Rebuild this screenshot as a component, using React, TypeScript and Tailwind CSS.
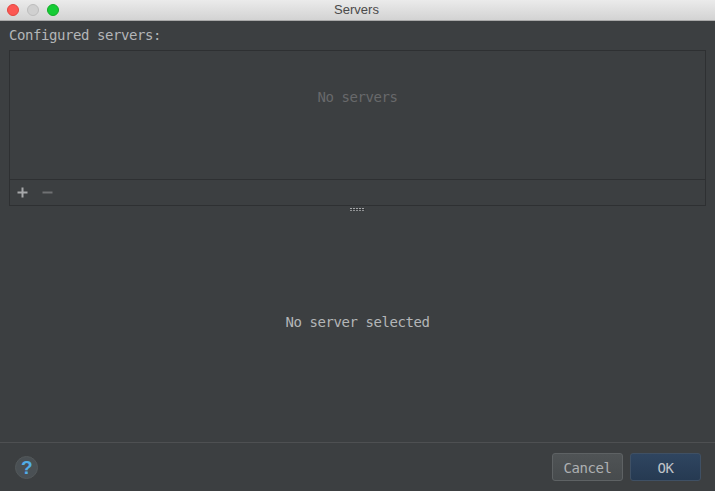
const mono = "font-['DejaVu_Sans_Mono',monospace]"

function TrafficLights() {
  return (
    <div className="flex items-center gap-[8px] pl-[7px]">
      <span className="h-3 w-3 rounded-full border-[0.5px] border-[#e2463f] bg-[#fc5753]" />
      <span className="h-3 w-3 rounded-full border-[0.5px] border-[#bdbdbd] bg-[#d0d0d0]" />
      <span className="h-3 w-3 rounded-full border-[0.5px] border-[#12ac28] bg-[#15cc35]" />
    </div>
  )
}

function SplitterGrip() {
  return (
    <svg width="16" height="4" viewBox="0 0 16 4" className="block">
      {[0, 3, 6, 9, 12].map((x) => (
        <g key={x}>
          <rect x={x} y="0" width="2" height="1" fill="#a4a6a8" />
          <rect x={x} y="2" width="2" height="1" fill="#8f9193" />
          <rect x={x + 2} y="1" width="1" height="1" fill="#2a2c2e" />
        </g>
      ))}
    </svg>
  )
}

function HelpIcon() {
  return (
    <div className="flex h-[23px] w-[23px] items-center justify-center rounded-full border border-[#53585a] bg-[#4a5054]">
      <span className="font-['Liberation_Sans',sans-serif] text-[19px] leading-none font-bold text-[#52ade8]">?</span>
    </div>
  )
}

export default function App() {
  return (
    <div className={`flex h-[491px] w-[715px] flex-col overflow-hidden bg-[#3c3f41] text-[14px] tracking-[-0.43px] ${mono}`}>
      {/* Title bar */}
      <div className="relative flex h-[21px] shrink-0 items-center border-b border-[#a9a9a9] bg-gradient-to-b from-[#ebebeb] to-[#d3d3d3]">
        <TrafficLights />
        <span className="absolute inset-x-0 pr-[2px] text-center font-['Liberation_Sans',sans-serif] text-[13px] tracking-normal text-[#4a4a4a]">
          Servers
        </span>
      </div>

      <div className="flex min-h-0 flex-1 flex-col">
        <div className="h-[29px] shrink-0 pt-[5px] pl-[9px] leading-[19px] text-[#b4b6b8]">Configured servers:</div>

        {/* Server list */}
        <div className="mx-[9px] flex h-[156px] shrink-0 flex-col border border-[#2e3032]">
          <div className="flex h-[128px] shrink-0 justify-center pt-[37px] leading-[19px] text-[#68696b]">No servers</div>
          <div className="flex h-[26px] shrink-0 items-center gap-[14px] border-t border-[#2e3032] pl-[7px]">
            <svg width="11" height="11" viewBox="0 0 11 11">
              <path d="M4.5 0.5h2v4h4v2h-4v4h-2v-4h-4v-2h4z" fill="#a6a8aa" />
            </svg>
            <svg width="11" height="11" viewBox="0 0 11 11">
              <rect x="0.5" y="4.5" width="10" height="2" fill="#6f7173" />
            </svg>
          </div>
        </div>

        <div className="flex h-[7px] shrink-0 items-center justify-center pt-[1px]">
          <SplitterGrip />
        </div>

        <div className="flex flex-1 items-center justify-center pb-[10px] text-[#b4b6b8]">No server selected</div>
      </div>

      {/* Footer */}
      <div className="flex h-[49px] shrink-0 items-center justify-between border-t border-[#4e5052] pr-[14px] pl-[15px]">
        <HelpIcon />
        <div className="flex gap-[7px]">
          <button className="h-[28px] w-[71px] rounded-[3px] border border-[#5e6264] bg-gradient-to-b from-[#4f5355] to-[#474b4d] pt-[3px] text-[#aeb0b2]">
            Cancel
          </button>
          <button className="h-[28px] w-[71px] rounded-[3px] border border-[#3f5064] bg-gradient-to-b from-[#2f4560] to-[#263a52] pt-[3px] text-[#c0c4c8]">
            OK
          </button>
        </div>
      </div>
    </div>
  )
}
